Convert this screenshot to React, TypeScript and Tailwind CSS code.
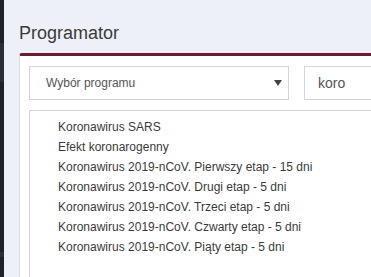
import React from "react";

const items = [
  "Koronawirus SARS",
  "Efekt koronarogenny",
  "Koronawirus 2019-nCoV. Pierwszy etap - 15 dni",
  "Koronawirus 2019-nCoV. Drugi etap - 5 dni",
  "Koronawirus 2019-nCoV. Trzeci etap - 5 dni",
  "Koronawirus 2019-nCoV. Czwarty etap - 5 dni",
  "Koronawirus 2019-nCoV. Piąty etap - 5 dni",
];

export default function App() {
  return (
    <div
      className="flex h-[277px] w-[371px] overflow-hidden bg-[#edf1f7]"
      style={{ fontFamily: '"Liberation Sans", Arial, sans-serif' }}
    >
      {/* dark sidebar edge */}
      <div className="flex w-[4px] shrink-0 flex-col bg-[#1d2128]">
        <div className="h-[43px]" />
        <div className="h-[39px] bg-[#2a2e36]" />
        <div className="flex-1" />
        <div className="mb-[20px] h-[5px] bg-[#2a2e36]" />
      </div>

      <div className="flex min-w-0 flex-1 flex-col pl-[15px]">
        <h1 className="mt-[23px] text-[18px] leading-[20px] text-[#3a3a3a]">
          Programator
        </h1>

        <div className="mt-[10px] flex w-[420px] flex-1 flex-col rounded-tl-[3px] border-t-[3px] border-l border-[#6b1c2e] border-l-[#dcdcdc] bg-white pl-[9px] pt-[10px]">
          <div className="flex gap-[15px]">
            <div className="flex h-[34px] w-[260px] shrink-0 items-center justify-between border border-[#d4d4d4] pl-[16px] pr-[5px]">
              <span className="text-[12px] text-[#555]">Wybór programu</span>
              <svg width="8" height="6" viewBox="0 0 8 6" className="mr-[1px]">
                <path d="M0 0 H8 L4 6 Z" fill="#444" />
              </svg>
            </div>
            <div className="flex h-[34px] w-[150px] shrink-0 items-center border border-[#d4d4d4] pl-[13px]">
              <span className="text-[14px] text-[#555]">koro</span>
            </div>
          </div>

          <div className="mt-[10px] flex-1 border-t border-l border-[#d4d4d4] pl-[28px] pt-[6px]">
            {items.map((it) => (
              <div key={it} className="whitespace-nowrap text-[12px] leading-[20px] text-[#3a3a3a]">
                {it}
              </div>
            ))}
          </div>
        </div>
      </div>
    </div>
  );
}
